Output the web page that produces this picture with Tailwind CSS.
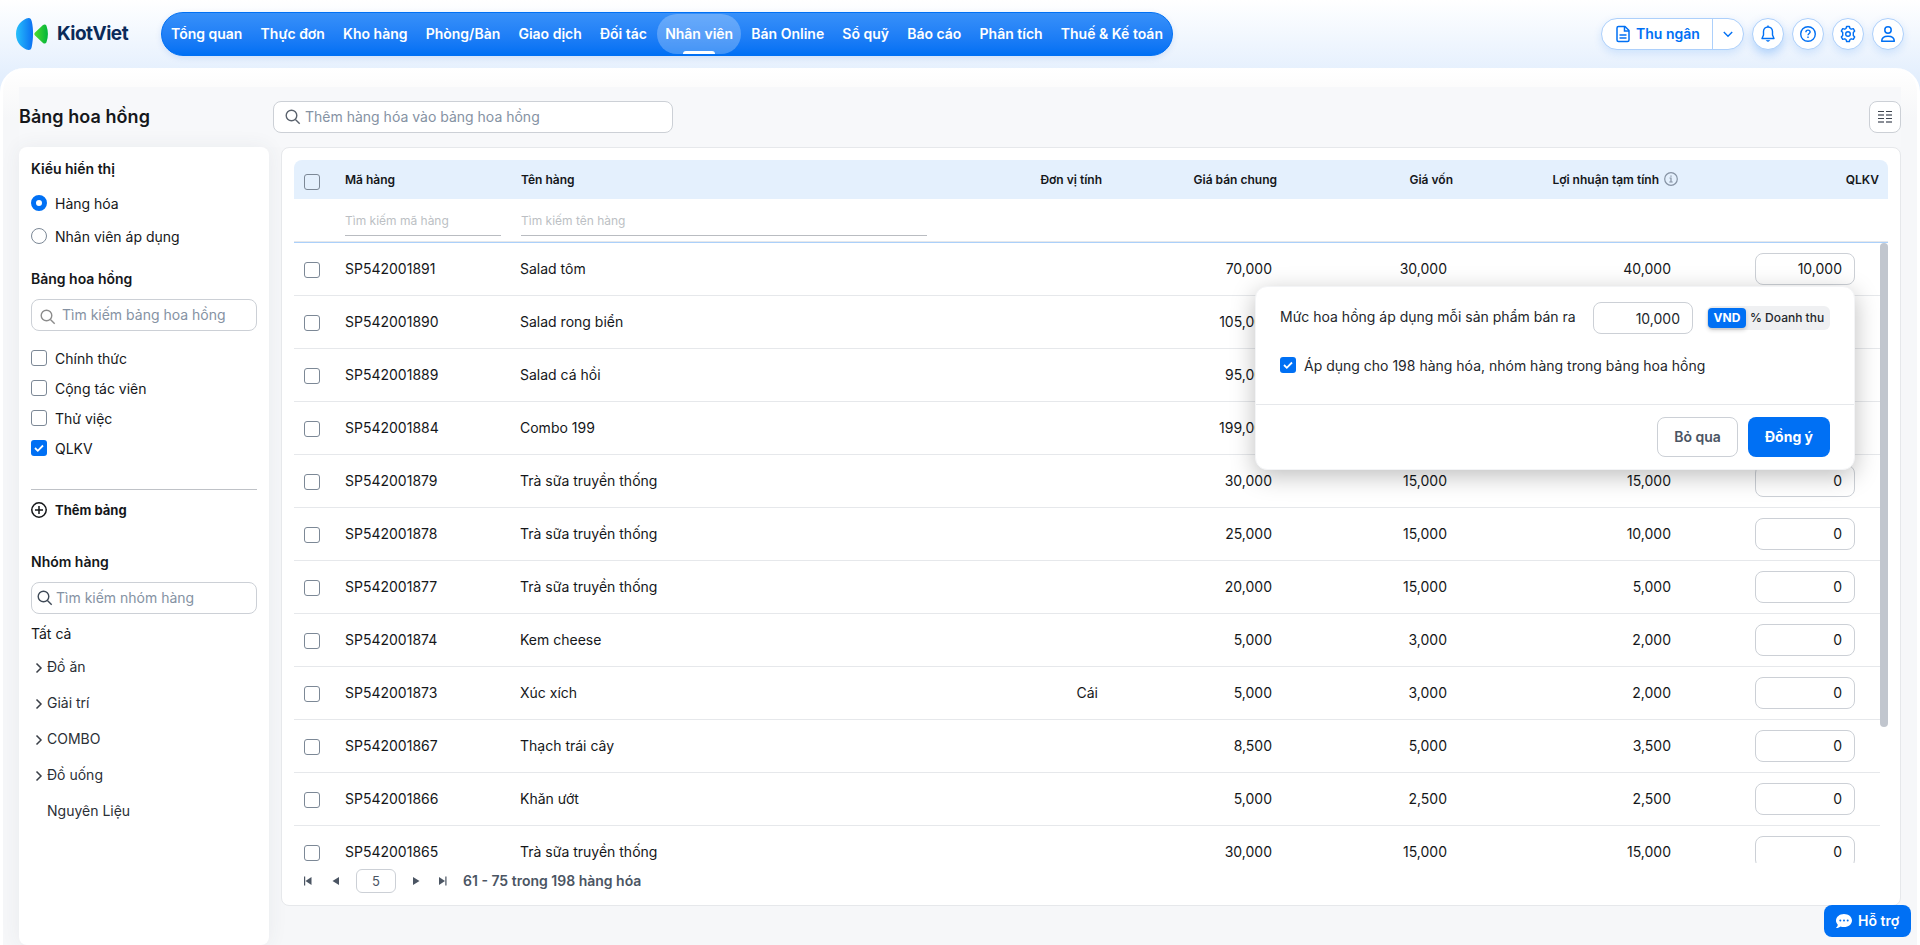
<!DOCTYPE html>
<html lang="vi">
<head>
    <meta charset="UTF-8" />
    <meta name="viewport" content="width=device-width, initial-scale=1.0" />
    <script src="https://cdn.jsdelivr.net/npm/@tailwindcss/browser@4"></script>
    <title>KiotViet - Bảng hoa hồng</title>
</head>
<body class="h-screen overflow-hidden bg-[linear-gradient(to_bottom,#ffffff_0px,#e2eefd_80px)] font-['Inter',sans-serif] text-sm text-[#15171a]">
    <div class="flex h-full flex-col">
        <!-- Top bar -->
        <header class="flex h-[68px] shrink-0 items-center pt-px pr-4 pb-px pl-4">
            <a class="flex w-[145px] items-center" href="#">
                <svg class="h-8 w-8" viewBox="0 0 32 32">
                    <defs>
                        <linearGradient id="blue" x1="0" x2="1"><stop offset="0" stop-color="#27c0fb" /><stop offset="1" stop-color="#0b6ff2" /></linearGradient>
                        <linearGradient id="green" x1="0" x2="1"><stop offset="0" stop-color="#4fdc2c" /><stop offset="1" stop-color="#00b43c" /></linearGradient>
                    </defs>
                    <path fill="url(#blue)" d="M12.6 0C14.6 0 15.4 1.6 15.8 3.6c.9 4.200 1.300 8.200 1.200 12.400 0 4.400-.4 8.400-1.200 12.400C15.400 30.600 14.600 32 12.600 32 6.500 31 0 25 0 16S6.500 1 12.600 0z" />
                    <path fill="url(#green)" d="M19 14.600 27 7.100c1.300-1.200 3-.8 3.500.8 1.900 5.400 1.900 10.800 0 16.200-.5 1.600-2.200 2-3.500.8L19 17.400c-.9-.9-.9-1.900 0-2.800z" />
                </svg>
                <span class="ml-[9px] text-[19px] font-bold tracking-[-0.5px] text-[#0a2a59]">KiotViet</span>
            </a>
            <nav class="flex h-11 w-[1012px] items-center justify-between rounded-full border border-[#0070f4] bg-linear-to-b from-[#3790f9] to-[#0070f4] px-px font-semibold whitespace-nowrap text-white shadow-[0_2px_6px_rgba(0,80,200,0.12)]">
                <a class="px-2" href="#">Tổng quan</a>
                <a class="px-2" href="#">Thực đơn</a>
                <a class="px-2" href="#">Kho hàng</a>
                <a class="px-2" href="#">Phòng/Bàn</a>
                <a class="px-2" href="#">Giao dịch</a>
                <a class="px-2" href="#">Đối tác</a>
                <a class="relative flex h-10 items-center rounded-full bg-white/25 px-2" href="#">Nhân viên
                    <span class="absolute bottom-0 left-1/2 h-[3px] w-8 -translate-x-1/2 rounded-t-sm bg-white"></span>
                </a>
                <a class="px-2" href="#">Bán Online</a>
                <a class="px-2" href="#">Sổ quỹ</a>
                <a class="px-2" href="#">Báo cáo</a>
                <a class="px-2" href="#">Phân tích</a>
                <a class="px-2" href="#">Thuế &amp; Kế toán</a>
            </nav>
            <div class="ml-auto flex items-center gap-2 text-[#0070f4]">
                <div class="flex h-8 w-[143px] items-center rounded-full border border-[#add0fb] bg-white shadow-[0_3px_8px_rgba(0,112,244,0.14)]">
                    <a class="flex h-full w-[111px] items-center border-r border-[#add0fb] pl-3 font-semibold" href="#">
                        <svg class="mr-1 h-[18px] w-[18px]" viewBox="0 0 18 18" fill="none" stroke="currentColor" stroke-width="1.500"><path d="M3 3c0-.9.600-1.500 1.500-1.500h6.500l4 4V15c0 .9-.6 1.500-1.500 1.500h-9c-.9 0-1.500-.6-1.500-1.500z" stroke-linejoin="round" /><path d="M10.500 1.500V6H15" /><path d="M5.500 10h7M5.500 13h7" /></svg>
                        <span>Thu ngân</span>
                    </a>
                    <svg class="mx-auto h-3 w-3" viewBox="0 0 12 12" fill="none" stroke="currentColor" stroke-width="1.400"><path d="M1.800 4 6 8.200 10.200 4" /></svg>
                </div>
                <a class="flex h-8 w-8 items-center justify-center rounded-full border border-[#add0fb] bg-white shadow-[0_4px_10px_rgba(0,112,244,0.25)]" href="#">
                    <svg class="h-[18px] w-[18px]" viewBox="0 0 18 18" fill="none" stroke="currentColor" stroke-width="1.400" stroke-linejoin="round"><path d="M9 2C6.200 2 4.500 4 4.500 6.500V10L3 13.500h12L13.500 10V6.500C13.500 4 11.800 2 9 2z" /><path d="M9 .5V2" /><path d="M7.300 15.500a1.800 1.300 0 0 0 3.400 0z" fill="currentColor" stroke-width=".6" /></svg>
                </a>
                <a class="flex h-8 w-8 items-center justify-center rounded-full border border-[#add0fb] bg-white shadow-[0_3px_8px_rgba(0,112,244,0.14)]" href="#">
                    <svg class="h-[18px] w-[18px]" viewBox="0 0 18 18" fill="none" stroke="currentColor" stroke-width="1.400"><circle cx="9" cy="9" r="7.300" /><path d="M6.900 7.200c0-1.300.9-2.100 2.100-2.100s2.100.8 2.100 1.900c0 1.400-2.100 1.500-2.100 3.200" /><path d="M9 11.400v1.500" /></svg>
                </a>
                <a class="flex h-8 w-8 items-center justify-center rounded-full border border-[#add0fb] bg-white shadow-[0_3px_8px_rgba(0,112,244,0.14)]" href="#">
                    <svg class="h-[18px] w-[18px]" viewBox="0 0 18 18" fill="none" stroke="currentColor" stroke-width="1.400" stroke-linejoin="round"><path d="M7.600 1.500h2.800l.6 2 1.200.7 2.100-.6 1.400 2.500-1.400 1.500v2.800l1.400 1.500-1.400 2.500-2.100-.6-1.200.7-.6 2H7.600l-.6-2-1.200-.7-2.100.6-1.400-2.500 1.400-1.500V7.600L2.300 6.100l1.400-2.500 2.100.6L7 3.500z" /><circle cx="9" cy="9" r="2.300" /></svg>
                </a>
                <a class="flex h-8 w-8 items-center justify-center rounded-full border border-[#add0fb] bg-white shadow-[0_3px_8px_rgba(0,112,244,0.14)]" href="#">
                    <svg class="h-[18px] w-[18px]" viewBox="0 0 18 18" fill="none" stroke="currentColor" stroke-width="1.500" stroke-linejoin="round"><circle cx="9" cy="5" r="3.200" /><path d="M2.700 16.200c0-3 2.300-5 6.300-5s6.300 2 6.300 5z" /></svg>
                </a>
            </div>
        </header>

        <div class="flex min-h-0 flex-1 flex-col rounded-t-3xl border-x-[3px] border-white bg-[linear-gradient(to_bottom,#ffffff_0px,#fcfcfc_19px,#f6f7f9_50px)] px-4 pt-[19px]">
            <!-- Page title and product search -->
            <div class="flex h-[60px] shrink-0 items-center bg-[#f7f8fa]">
                <h1 class="w-[254px] text-lg font-semibold tracking-[0.05px]">Bảng hoa hồng</h1>
                <label class="flex h-8 w-[400px] items-center rounded-lg border border-[#ccd0d6] bg-white pl-[11px]">
                    <svg class="h-4 w-4 text-[#5a626d]" viewBox="0 0 16 16" fill="none" stroke="currentColor" stroke-width="1.400"><circle cx="6.500" cy="6.500" r="5.300" /><path d="m10.400 10.400 4.300 4.300" /></svg>
                    <input class="ml-1 w-80 outline-none placeholder:text-[#8592a3]" type="text" placeholder="Thêm hàng hóa vào bảng hoa hồng" />
                </label>
                <button class="ml-auto flex h-8 w-8 items-center justify-center rounded-lg border border-[#ccd0d6] bg-white">
                    <svg class="h-4 w-4" viewBox="0 0 16 16"><path fill="#3f4650" d="M1 2h6v1H1zM9 2h6v1H9zM1 9h6v1H1zM9 9h6v1H9z" /><path fill="#8a8e96" d="M1 5h6v2H1zM9 5h6v2H9zM1 12h6v2H1zM9 12h6v2H9z" /></svg>
                </button>
            </div>

            <div class="flex min-h-0 flex-1">
                <!-- Filters -->
                <aside class="h-[798px] w-[250px] shrink-0 rounded-lg bg-white px-3 pt-3 shadow-[0_0_20px_rgba(60,70,90,0.07)]">
                    <h2 class="leading-5 font-semibold">Kiểu hiển thị</h2>
                    <div class="mt-4 flex h-[18px] items-center">
                        <span class="mb-0.5 h-4 w-4 rounded-full border-[5px] border-[#0070f4] bg-white"></span>
                        <span class="ml-2">Hàng hóa</span>
                    </div>
                    <div class="mt-[15px] flex h-[18px] items-center">
                        <span class="mb-0.5 h-4 w-4 rounded-full border border-[#7c8896] bg-white"></span>
                        <span class="ml-2">Nhân viên áp dụng</span>
                    </div>
                    <h2 class="mt-[23px] leading-5 font-semibold">Bảng hoa hồng</h2>
                    <label class="mt-2.5 flex h-8 items-center rounded-lg border border-[#ccd0d6] pl-2">
                        <svg class="mt-1 h-4 w-4 text-[#8c8c8c]" viewBox="0 0 16 16" fill="none" stroke="currentColor" stroke-width="1.400"><circle cx="6.500" cy="6.500" r="5.300" /><path d="m10.400 10.400 4.300 4.300" /></svg>
                        <input class="ml-1.5 w-44 outline-none placeholder:text-[#8592a3]" type="text" placeholder="Tìm kiếm bảng hoa hồng" />
                    </label>
                    <div id="commissionTables" class="mt-[13px]"></div>
                    <div class="mt-[25px] h-px bg-[#bfc2c7]"></div>
                    <button class="mt-2.5 flex h-5 items-center text-[13px] font-bold">
                        <svg class="h-4 w-4" viewBox="0 0 16 16" fill="none" stroke="currentColor" stroke-width="1.500"><circle cx="8" cy="8" r="7.200" /><path d="M8 4v8M4 8h8" /></svg>
                        <span class="ml-2">Thêm bảng</span>
                    </button>
                    <h2 class="mt-8 leading-5 font-semibold">Nhóm hàng</h2>
                    <label class="mt-2.5 flex h-8 items-center rounded-lg border border-[#ccd0d6] pl-[5px]">
                        <svg class="h-4 w-4 text-[#3f4a57]" viewBox="0 0 16 16" fill="none" stroke="currentColor" stroke-width="1.400"><circle cx="6.500" cy="6.500" r="5.300" /><path d="m10.400 10.400 4.300 4.300" /></svg>
                        <input class="ml-[3px] w-44 outline-none placeholder:text-[#8592a3]" type="text" placeholder="Tìm kiếm nhóm hàng" />
                    </label>
                    <div class="mt-2.5 leading-5">Tất cả</div>
                    <div id="groups" class="mt-[5px] text-[#2b2f36]"></div>
                </aside>

                <!-- Commission table -->
                <main class="ml-3 flex h-[759px] flex-1 flex-col rounded-lg border border-[#e6e8eb] bg-white px-3 pt-3">
                    <div class="grid h-[39px] shrink-0 grid-cols-[51px_175px_420px_162px_175px_176px_225px_202px] items-center rounded-t-lg bg-[#e4f0fd] text-xs font-semibold">
                        <span class="mt-1 ml-2.5 h-4 w-4 rounded-[3px] border border-[#7c8896]"></span>
                        <span>Mã hàng</span>
                        <span class="pl-px">Tên hàng</span>
                        <span class="text-right">Đơn vị tính</span>
                        <span class="text-right">Giá bán chung</span>
                        <span class="text-right">Giá vốn</span>
                        <span class="flex items-center justify-end">Lợi nhuận tạm tính
                            <svg class="mb-0.5 ml-[5px] h-3.5 w-3.5 text-[#8592a3]" viewBox="0 0 14 14" fill="none" stroke="currentColor" stroke-width="1.200"><circle cx="7" cy="7" r="6.300" /><path d="M5.500 6H7v4M5.300 10h3.400M7 3.400v1.300" /></svg>
                        </span>
                        <span class="pr-px text-right">QLKV</span>
                    </div>
                    <div class="h-11 shrink-0 border-b border-[#abd0fa]">
                        <div class="flex h-[43px] border-b border-[#e6e8eb] pl-[51px] text-xs">
                            <input class="mt-2 h-[29px] w-[156px] border-b border-[#b9bcc1] pb-0.5 outline-none placeholder:text-[#bcbfc4]" type="text" placeholder="Tìm kiếm mã hàng" />
                            <input class="mt-2 ml-5 h-[29px] w-[406px] border-b border-[#b9bcc1] pb-0.5 outline-none placeholder:text-[#bcbfc4]" type="text" placeholder="Tìm kiếm tên hàng" />
                        </div>
                    </div>
                    <div class="flex h-[620px] shrink-0 overflow-hidden">
                        <div id="products" class="w-[1586px]"></div>
                        <div class="h-[484px] w-2 rounded-full bg-[#c1c6ce]"></div>
                    </div>
                    <div class="mt-1.5 flex h-6 items-center pl-2.5 text-[#4b5563]">
                        <svg class="h-2.5 w-2" viewBox="0 0 8 10" fill="currentColor"><path d="M0 .5h1.200v9H0zM7.500 1v8L1.500 5z" /></svg>
                        <svg class="ml-5 h-2.5 w-2" viewBox="0 0 8 10" fill="currentColor"><path d="M7 1v8L.5 5z" /></svg>
                        <input class="ml-4 h-6 w-10 rounded-md border border-[#ccd0d6] pb-px text-center text-[13px] outline-none" type="text" value="5" />
                        <svg class="ml-4 h-2.5 w-2" viewBox="0 0 8 10" fill="currentColor"><path d="M1 1v8l6.500-4z" /></svg>
                        <svg class="ml-[19px] h-2.5 w-2" viewBox="0 0 8 10" fill="currentColor"><path d="M6.300.5h1.200v9H6.300zM0 1v8l6-4z" /></svg>
                        <span class="ml-4 text-sm font-semibold">61 - 75 trong 198 hàng hóa</span>
                    </div>
                </main>
            </div>
        </div>
    </div>

    <!-- Commission popover -->
    <div class="absolute top-[286px] left-[1255px] flex h-[184px] w-[600px] flex-col rounded-xl border border-[#f3f4f6] bg-white text-[#24272c] shadow-[0_6px_24px_rgba(0,0,0,0.26)]">
        <div class="h-[118px] border-b border-[#e6e8eb] px-6 pt-[15px]">
            <div class="flex items-center">
                <span class="w-[313px] pb-0.5 whitespace-nowrap">Mức hoa hồng áp dụng mỗi sản phẩm bán ra</span>
                <input class="h-8 w-[100px] rounded-lg border border-[#ccd0d6] pr-3 text-right outline-none" type="text" value="10,000" />
                <div class="ml-[14px] flex h-6 w-[123px] shrink-0 items-center rounded-md bg-[#eff0f2] pl-px text-xs font-medium whitespace-nowrap">
                    <span class="flex h-5 w-[38px] items-center justify-center rounded bg-[#0070f4] font-bold text-white shadow-[0_2px_4px_rgba(0,0,0,0.2)]">VND</span>
                    <span class="ml-1">% Doanh thu</span>
                </div>
            </div>
            <div class="mt-[22px] flex items-center">
                <span class="mb-0.5 flex h-4 w-4 items-center justify-center rounded-[3px] bg-[#0070f4]">
                    <svg class="h-3 w-3" viewBox="0 0 12 12" fill="none" stroke="#fff" stroke-width="1.800"><path d="m2 6 2.800 2.800L10 3.500" /></svg>
                </span>
                <span class="ml-2">Áp dụng cho 198 hàng hóa, nhóm hàng trong bảng hoa hồng</span>
            </div>
        </div>
        <div class="flex justify-end gap-2.5 pt-3 pr-6 font-semibold">
            <button class="h-10 w-[81px] rounded-lg border border-[#ccd0d6] text-[#4b5563]">Bỏ qua</button>
            <button class="h-10 w-[82px] rounded-lg bg-[#0070f4] font-bold text-white">Đồng ý</button>
        </div>
    </div>

    <!-- Support button -->
    <button class="absolute top-[905px] left-[1824px] flex h-8 w-[87px] items-center rounded-lg bg-[#0070f4] pl-3 font-semibold text-white">
        <svg class="h-4 w-4" viewBox="0 0 16 16"><path fill="#fff" d="M8 1C3.600 1 0 3.900 0 7.500c0 1.600.7 3 1.800 4.200C1.700 12.800 1 14 .2 14.600c-.2.2-.1.500.2.500 1.700 0 3.200-.7 4.100-1.500 1.100.4 2.200.5 3.500.5 4.400 0 8-2.900 8-6.600S12.400 1 8 1z" /><circle cx="4.300" cy="7.500" r="1" fill="#0070f4" /><circle cx="8" cy="7.500" r="1" fill="#0070f4" /><circle cx="11.700" cy="7.500" r="1" fill="#0070f4" /></svg>
        <span class="ml-1.5">Hỗ trợ</span>
    </button>

    <script>
        const tables = [
            { name: "Chính thức" },
            { name: "Cộng tác viên" },
            { name: "Thử việc" },
            { name: "QLKV", checked: true }
        ];

        const groups = [
            { name: "Đồ ăn", children: true },
            { name: "Giải trí", children: true },
            { name: "COMBO", children: true },
            { name: "Đồ uống", children: true },
            { name: "Nguyên Liệu" }
        ];

        // code, name, unit, price, cost, profit, commission
        const products = [
            ["SP542001891", "Salad tôm", "", "70,000", "30,000", "40,000", "10,000"],
            ["SP542001890", "Salad rong biển", "", "105,000", "", "", "0"],
            ["SP542001889", "Salad cá hồi", "", "95,000", "", "", "0"],
            ["SP542001884", "Combo 199", "", "199,000", "", "", "0"],
            ["SP542001879", "Trà sữa truyền thống", "", "30,000", "15,000", "15,000", "0"],
            ["SP542001878", "Trà sữa truyền thống", "", "25,000", "15,000", "10,000", "0"],
            ["SP542001877", "Trà sữa truyền thống", "", "20,000", "15,000", "5,000", "0"],
            ["SP542001874", "Kem cheese", "", "5,000", "3,000", "2,000", "0"],
            ["SP542001873", "Xúc xích", "Cái", "5,000", "3,000", "2,000", "0"],
            ["SP542001867", "Thạch trái cây", "", "8,500", "5,000", "3,500", "0"],
            ["SP542001866", "Khăn ướt", "", "5,000", "2,500", "2,500", "0"],
            ["SP542001865", "Trà sữa truyền thống", "", "30,000", "15,000", "15,000", "0"]
        ];

        const checkedBox = `
            <span class="mb-0.5 flex h-4 w-4 items-center justify-center rounded-[3px] bg-[#0070f4]">
                <svg class="h-3 w-3" viewBox="0 0 12 12" fill="none" stroke="#fff" stroke-width="1.800"><path d="m2 6 2.800 2.800L10 3.500" /></svg>
            </span>`;
        const emptyBox = `<span class="mb-0.5 h-4 w-4 rounded-[3px] border border-[#7c8896]"></span>`;

        document.getElementById("commissionTables").innerHTML = tables.map(table => `
            <div class="flex h-[30px] items-center">
                ${table.checked ? checkedBox : emptyBox}
                <span class="ml-2">${table.name}</span>
            </div>
        `).join("");

        document.getElementById("groups").innerHTML = groups.map(group => `
            <div class="flex h-9 items-center pl-1">
                <svg class="mt-px h-3 w-3 text-[#3a3f47]" viewBox="0 0 12 12" fill="none" stroke="currentColor" stroke-width="1.500">
                    ${group.children ? `<path d="m1.500 1.500 4.500 4.500-4.500 4.500" />` : ""}
                </svg>
                <span>${group.name}</span>
            </div>
        `).join("");

        document.getElementById("products").innerHTML = products.map(([code, name, unit, price, cost, profit, commission]) => `
            <div class="grid h-[53px] grid-cols-[51px_175px_420px_162px_175px_176px_225px_202px] items-center border-b border-[#e6e8eb]">
                <span class="mt-0.5 ml-2.5 h-4 w-4 rounded-[3px] border border-[#7c8896]"></span>
                <span>${code}</span>
                <span>${name}</span>
                <span class="pr-1 text-right">${unit}</span>
                <span class="pr-[5px] text-right">${price}</span>
                <span class="pr-1.5 text-right">${cost}</span>
                <span class="pr-[7px] text-right">${profit}</span>
                <span class="flex justify-end pr-[25px]">
                    <input class="h-8 w-[100px] rounded-lg border border-[#ccd0d6] pr-3 pb-0.5 text-right outline-none" type="text" value="${commission}" />
                </span>
            </div>
        `).join("");
    </script>
</body>
</html>
